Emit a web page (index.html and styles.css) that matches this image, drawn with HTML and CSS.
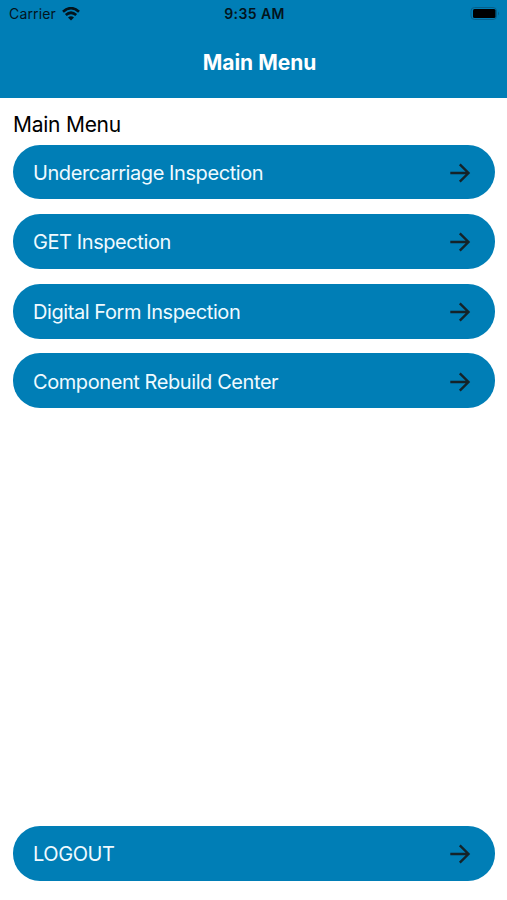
FILE: index.html
```html
<!DOCTYPE html>
<html lang="en">
<head>
<meta charset="utf-8">
<title>Main Menu</title>
<link rel="stylesheet" href="styles.css">
</head>
<body>
<svg class="defs" width="0" height="0"><symbol id="arrow" viewBox="0 0 22 22"><path d="M1.3 11H19.5M10.8 2.3L19.5 11L10.8 19.7" fill="none" stroke="currentColor" stroke-width="2.4"/></symbol></svg>
<header class="header">
  <div class="status">
    <div class="carrier"><span class="carrier-name">Carrier</span>
      <svg class="wifi" width="18" height="14" viewBox="0 0 18 14"><g fill="none" stroke="#03141c" stroke-width="2.7"><path d="M1 4.7Q9-2.3 17 4.7"/><path d="M3.8 8Q9 3.5 14.2 8"/></g><path d="M6 10.4Q9 8 12 10.4L9 13.5Z" fill="#03141c"/></svg>
    </div>
    <div class="time">9:35 AM</div>
    <svg class="battery" width="30" height="13" viewBox="0 0 30 13"><rect x="1" y=".5" width="25.5" height="12" rx="3.5" fill="none" stroke="#06608b"/><rect x="3" y="2" width="22.5" height="9" rx="1.5" fill="#000"/><path d="M28 4.5Q30 6.5 28 8.5Z" fill="#06608b"/></svg>
  </div>
  <h1 class="title">Main Menu</h1>
</header>
<main class="content">
  <h2 class="heading">Main Menu</h2>
  <nav class="menu">
    <a class="item"><span class="label">Undercarriage Inspection</span><svg class="arrow"><use href="#arrow"/></svg></a>
    <a class="item"><span class="label">GET Inspection</span><svg class="arrow"><use href="#arrow"/></svg></a>
    <a class="item"><span class="label">Digital Form Inspection</span><svg class="arrow"><use href="#arrow"/></svg></a>
    <a class="item"><span class="label">Component Rebuild Center</span><svg class="arrow"><use href="#arrow"/></svg></a>
  </nav>
  <a class="item logout"><span class="label">LOGOUT</span><svg class="arrow"><use href="#arrow"/></svg></a>
</main>
</body>
</html>
```
FILE: styles.css
```css
* { box-sizing: border-box; }
body { margin: 0; height: 900px; display: flex; flex-direction: column; background: #fff; font-family: Inter, sans-serif; color: #000; overflow: hidden; }
.defs { position: absolute; }
.header { height: 98.4px; background: #007eb6; flex: none; }
.status { height: 27px; padding: 0 7px 0 9px; display: grid; grid-template-columns: 1fr auto 1fr; align-items: center; color: #03141c; }
.carrier { display: flex; align-items: center; gap: 6px; font-size: 14px; letter-spacing: .15px; }
.time { font-size: 14px; font-weight: 600; letter-spacing: .4px; }
.battery { justify-self: end; }
.title { margin: 0; height: 71px; display: flex; align-items: center; justify-content: center; padding-left: 12px; color: #fff; font-size: 21px; font-weight: 700; }
.content { flex: 1; display: flex; flex-direction: column; padding: 10.6px 12.5px 19.5px 13px; }
.heading { margin: 0; height: 35.7px; line-height: 31px; font-size: 21px; font-weight: 400; letter-spacing: -.25px; }
.menu { display: flex; flex-direction: column; gap: 14.8px; }
.item { height: 54.8px; flex: none; border-radius: 27px; background: #007eb6; display: flex; align-items: center; justify-content: space-between; padding: 1.3px 23.5px 0 20px; color: #effaff; font-size: 20px; letter-spacing: -.42px; }
.arrow { width: 22px; height: 22px; color: #142329; }
.logout { margin-top: auto; }
```
